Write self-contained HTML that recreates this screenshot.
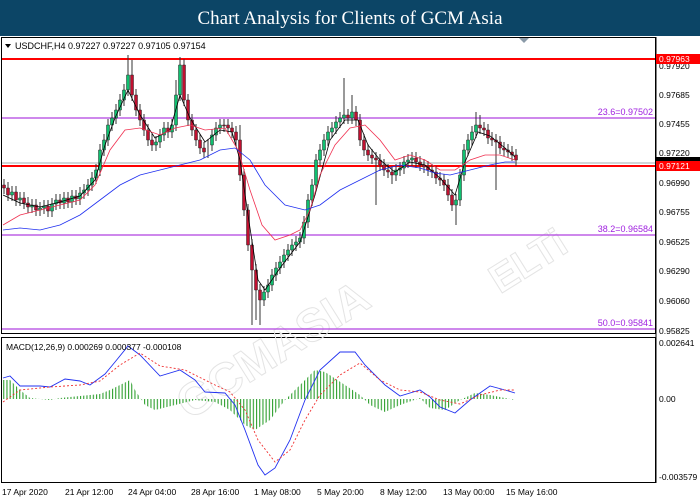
<!DOCTYPE html>
<html><head><meta charset="utf-8"><style>
body{margin:0;width:700px;height:500px;overflow:hidden;background:#fff;font-family:"Liberation Sans",sans-serif}
#t{position:absolute;left:0;top:0;width:700px;height:36px;background:#0c4566;color:#fff;font-family:"Liberation Serif",serif;font-size:19px;text-align:center;line-height:37px}
svg{position:absolute;left:0;top:0}
</style></head><body>
<div id="t">Chart Analysis for Clients of GCM Asia</div>
<svg width="700" height="500" xmlns="http://www.w3.org/2000/svg" font-family="Liberation Sans, sans-serif" font-size="9">
<defs><pattern id="st" x="0" y="0" width="3.2" height="10" patternUnits="userSpaceOnUse"><rect x="0" y="0" width="1.1" height="10" fill="#30a030"/></pattern></defs>
<rect x="1.5" y="37.5" width="654" height="296" fill="none" stroke="#000"/>
<rect x="1.5" y="337.5" width="654" height="145" fill="none" stroke="#000"/>
<polygon points="519,38 529,38 524,43" fill="#8a9aa8"/>
<g fill="none" stroke="#e4e4e4" stroke-width="1" font-weight="bold">
<text x="120" y="320" transform="rotate(-32 330 250)" font-size="46">GCMASIA</text>
<text x="450" y="280" transform="rotate(-32 500 200)" font-size="40">ELTi</text>
</g>
<line x1="2" y1="59" x2="655" y2="59" stroke="#f00" stroke-width="2"/>
<line x1="2" y1="118" x2="655" y2="118" stroke="#b040e0" stroke-width="1.3"/>
<line x1="2" y1="163" x2="655" y2="163" stroke="#c0c8cc" stroke-width="1.5"/>
<line x1="2" y1="166" x2="655" y2="166" stroke="#f00" stroke-width="2"/>
<line x1="2" y1="235" x2="655" y2="235" stroke="#b040e0" stroke-width="1.3"/>
<line x1="2" y1="329" x2="655" y2="329" stroke="#b040e0" stroke-width="1.3"/>
<g fill="#a020e0" text-anchor="end"><text x="653" y="115">23.6=0.97502</text><text x="653" y="232">38.2=0.96584</text><text x="653" y="326">50.0=0.95841</text></g>
<path fill="none" stroke="#333" stroke-width="1" d="M4 179V194M8 182V201M12 186V201M16 186V206M20 192V206M24 192V209M28 197V213M32 199V213M36 199V216M40 202V216M44 200V214M48 200V217M52 198V217M56 194V210M60 194V209M64 192V209M68 192V208M72 190V208M76 190V205M80 187V205M84 184V199M88 179V196M92 172V191M96 164V184M100 144V176M104 134V156M108 119V146M112 112V131M116 104V124M120 94V116M124 84V106M128 55V96M132 60V101M136 89V116M140 104V126M144 114V136M148 124V146M152 134V151M156 136V151M160 129V148M164 122V141M168 122V138M172 119V138M176 80V131M180 57V101M184 59V106M188 94V126M192 114V136M196 124V146M200 134V154M204 142V158M208 139V158M212 129V151M216 122V141M220 119V134M224 119V132M228 119V134M232 122V138M236 126V146M240 125V181M244 169V216M248 204V251M252 239V325M256 264V320M260 284V325M264 286V306M268 279V298M272 269V291M276 262V281M280 256V274M284 249V268M288 244V261M292 239V256M296 236V251M300 232V248M304 216V244M308 194V228M312 179V206M316 154V191M320 144V166M324 134V156M328 126V146M332 122V138M336 116V134M340 112V128M344 78V124M348 109V124M352 95V124M356 106V126M360 114V146M364 134V156M368 144V161M372 149V164M376 152V205M380 154V171M384 159V176M388 164V178M392 166V184M396 164V181M400 162V176M404 156V174M408 154V168M412 152V166M416 152V168M420 156V171M424 159V173M428 161V176M432 164V178M436 166V184M440 172V186M444 174V191M448 179V201M452 189V211M456 194V225M460 169V206M464 144V181M468 134V156M472 126V146M476 112V138M480 115V134M484 122V136M488 124V144M492 132V146M496 134V190M500 136V154M504 142V156M508 144V158M512 146V161M516 149V166"/>
<path fill="#10c070" stroke="#222" stroke-width="0.5" d="M10.5 192h3v3h-3zM18.5 198h3v2h-3zM30.5 205h3v2h-3zM38.5 208h3v2h-3zM42.5 206h3v2h-3zM50.5 204h3v7h-3zM54.5 200h3v4h-3zM62.5 198h3v5h-3zM70.5 196h3v6h-3zM78.5 193h3v6h-3zM82.5 190h3v3h-3zM86.5 185h3v5h-3zM90.5 178h3v7h-3zM94.5 170h3v8h-3zM98.5 150h3v20h-3zM102.5 140h3v10h-3zM106.5 125h3v15h-3zM110.5 118h3v7h-3zM114.5 110h3v8h-3zM118.5 100h3v10h-3zM122.5 90h3v10h-3zM126.5 75h3v15h-3zM154.5 142h3v3h-3zM158.5 135h3v7h-3zM162.5 128h3v7h-3zM170.5 125h3v7h-3zM174.5 95h3v30h-3zM178.5 65h3v30h-3zM210.5 135h3v10h-3zM214.5 128h3v7h-3zM218.5 125h3v3h-3zM262.5 292h3v8h-3zM266.5 285h3v7h-3zM270.5 275h3v10h-3zM274.5 268h3v7h-3zM278.5 262h3v6h-3zM282.5 255h3v7h-3zM286.5 250h3v5h-3zM290.5 245h3v5h-3zM294.5 242h3v3h-3zM298.5 238h3v4h-3zM302.5 222h3v16h-3zM306.5 200h3v22h-3zM310.5 185h3v15h-3zM314.5 160h3v25h-3zM318.5 150h3v10h-3zM322.5 140h3v10h-3zM326.5 132h3v8h-3zM330.5 128h3v4h-3zM334.5 122h3v6h-3zM338.5 118h3v4h-3zM342.5 115h3v3h-3zM350.5 112h3v6h-3zM394.5 170h3v5h-3zM398.5 168h3v2h-3zM402.5 162h3v6h-3zM406.5 160h3v2h-3zM410.5 158h3v2h-3zM454.5 200h3v5h-3zM458.5 175h3v25h-3zM462.5 150h3v25h-3zM466.5 140h3v10h-3zM470.5 132h3v8h-3zM474.5 125h3v7h-3z"/>
<path fill="#c01030" stroke="#222" stroke-width="0.5" d="M2.5 185h3v3h-3zM6.5 188h3v7h-3zM14.5 192h3v8h-3zM22.5 198h3v5h-3zM26.5 203h3v4h-3zM34.5 205h3v5h-3zM46.5 206h3v5h-3zM58.5 200h3v3h-3zM66.5 198h3v4h-3zM74.5 196h3v3h-3zM130.5 75h3v20h-3zM134.5 95h3v15h-3zM138.5 110h3v10h-3zM142.5 120h3v10h-3zM146.5 130h3v10h-3zM150.5 140h3v5h-3zM166.5 128h3v4h-3zM182.5 65h3v35h-3zM186.5 100h3v20h-3zM190.5 120h3v10h-3zM194.5 130h3v10h-3zM198.5 140h3v8h-3zM202.5 148h3v4h-3zM222.5 125h3v1h-3zM226.5 125h3v3h-3zM230.5 128h3v4h-3zM234.5 132h3v8h-3zM238.5 140h3v35h-3zM242.5 175h3v35h-3zM246.5 210h3v35h-3zM250.5 245h3v25h-3zM254.5 270h3v20h-3zM258.5 290h3v10h-3zM346.5 115h3v3h-3zM354.5 112h3v8h-3zM358.5 120h3v20h-3zM362.5 140h3v10h-3zM366.5 150h3v5h-3zM370.5 155h3v3h-3zM374.5 158h3v2h-3zM378.5 160h3v5h-3zM382.5 165h3v5h-3zM386.5 170h3v2h-3zM390.5 172h3v3h-3zM414.5 158h3v4h-3zM418.5 162h3v3h-3zM422.5 165h3v2h-3zM426.5 167h3v3h-3zM430.5 170h3v2h-3zM434.5 172h3v6h-3zM438.5 178h3v2h-3zM442.5 180h3v5h-3zM446.5 185h3v10h-3zM450.5 195h3v10h-3zM478.5 125h3v3h-3zM482.5 128h3v2h-3zM486.5 130h3v8h-3zM490.5 138h3v2h-3zM494.5 140h3v2h-3zM498.5 142h3v6h-3zM502.5 148h3v2h-3zM506.5 150h3v2h-3zM510.5 152h3v3h-3zM514.5 155h3v5h-3z"/>
<polyline fill="none" stroke="#000" stroke-width="0.8" points="3,195 20,203 40,207 60,202 80,196 95,180 105,145 115,118 128,90 140,115 155,138 170,130 180,95 190,118 205,142 220,130 232,132 240,160 248,215 258,280 265,290 280,268 300,242 315,195 330,140 345,120 358,120 368,145 380,160 395,172 410,162 425,165 440,178 455,195 465,162 478,132 490,136 505,148 515,157"/>
<polyline fill="none" stroke="#f03050" stroke-width="0.8" points="3,225 20,215 40,210 60,205 80,200 95,185 110,150 125,130 140,128 160,135 175,128 190,125 205,130 225,128 238,150 250,190 262,225 275,240 290,235 300,230 310,210 320,175 335,145 350,128 365,125 380,140 395,160 410,155 425,160 440,170 455,170 470,160 485,155 500,155 515,160"/>
<polyline fill="none" stroke="#2030f0" stroke-width="0.8" points="3,230 20,228 40,230 60,225 80,215 100,200 120,185 140,175 160,170 180,165 200,160 220,150 235,148 250,160 265,185 285,205 305,210 320,205 340,190 360,180 380,170 400,165 420,168 435,173 450,175 470,170 490,165 505,162 515,162"/>
<g fill="#000"><polygon points="5,44 11,44 8,48"/><text x="15" y="49" font-size="9">USDCHF,H4  0.97227 0.97227 0.97105 0.97154</text></g>
<line x1="656" y1="37" x2="656" y2="483" stroke="#000"/>
<g font-size="8.5" fill="#000"><text x="659" y="69">0.97920</text><text x="659" y="98">0.97685</text><text x="659" y="127">0.97455</text><text x="659" y="156">0.97220</text><text x="659" y="186">0.96990</text><text x="659" y="215">0.96755</text><text x="659" y="245">0.96525</text><text x="659" y="274">0.96290</text><text x="659" y="304">0.96060</text><text x="659" y="334">0.95825</text>
<text x="659" y="346">0.002641</text><text x="659" y="402">0.00</text><text x="659" y="480">-0.003579</text></g>
<rect x="656" y="54" width="44" height="10" fill="#f00"/><text x="659" y="62" font-size="8.5" fill="#fff">0.97963</text>
<rect x="656" y="157" width="44" height="4" fill="#000"/>
<rect x="656" y="161" width="44" height="10" fill="#f00"/><text x="659" y="169" font-size="8.5" fill="#fff">0.97121</text>
<polygon fill="url(#st)" points="3,399 3,380 10,380 20,390 30,398 50,400 60,398 80,396 100,394 110,390 120,385 130,380 135,390 145,405 155,410 175,405 195,400 215,402 230,410 245,425 255,430 270,420 285,400 300,385 315,370 325,372 345,385 360,395 370,405 385,412 400,405 420,398 430,408 445,410 460,400 475,393 490,395 505,398 515,400 515,399"/>
<polyline fill="none" stroke="#2030f0" stroke-width="0.9" points="3,378 10,376 20,386 40,386 50,387 65,379 80,381 90,385 105,374 115,362 128,346 140,355 160,376 180,370 195,380 205,392 225,393 235,405 245,430 258,465 265,475 275,468 290,440 305,400 320,370 340,352 355,352 365,365 385,385 400,396 420,390 430,397 440,407 455,413 470,400 490,386 505,390 515,393"/>
<polyline fill="none" stroke="#f03030" stroke-width="0.9" stroke-dasharray="2,2" points="3,402 20,390 50,387 80,385 100,381 120,365 140,353 160,366 185,370 215,385 230,392 245,410 258,440 275,462 290,450 305,420 320,395 340,375 360,363 380,380 400,390 420,392 440,400 460,404 480,395 500,390 515,390"/>
<text x="6" y="350" font-size="8.5" fill="#000">MACD(12,26,9) 0.000269 0.000377 -0.000108</text>
<g font-size="8.5" fill="#000"><text x="2" y="495">17 Apr 2020</text><text x="65" y="495">21 Apr 12:00</text><text x="128" y="495">24 Apr 04:00</text><text x="191" y="495">28 Apr 16:00</text><text x="254" y="495">1 May 08:00</text><text x="317" y="495">5 May 20:00</text><text x="380" y="495">8 May 12:00</text><text x="443" y="495">13 May 00:00</text><text x="506" y="495">15 May 16:00</text></g>
</svg>
</body></html>
